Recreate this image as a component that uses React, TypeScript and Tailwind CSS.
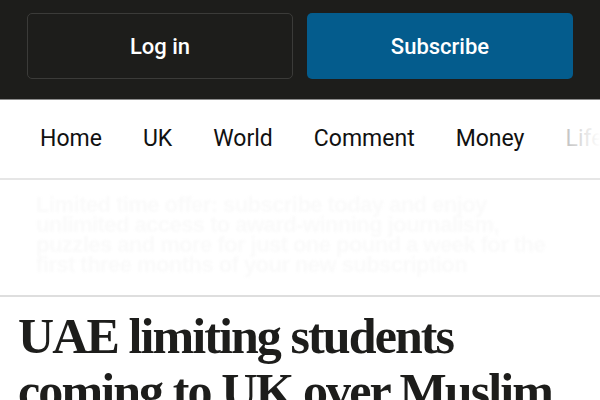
import React from "react";

const navItems = ["Home", "UK", "World", "Comment", "Money", "Life", "Sport"];

export default function App() {
  return (
    <div className="w-[600px] h-[400px] overflow-hidden bg-white" style={{ fontFamily: "Roboto, 'Liberation Sans', sans-serif" }}>
      {/* top bar */}
      <div className="h-[100px] bg-[#1d1d1b] border-b border-[#8c8c8c] flex gap-[14px] pl-[27px] pr-[27px] pt-[13px]">
        <button className="w-[266px] h-[66px] rounded-[5px] border border-[#3b3b39] text-white text-[22px] font-medium font-[Roboto]">
          Log in
        </button>
        <button className="w-[266px] h-[66px] rounded-[5px] bg-[#045c8d] text-white text-[22px] font-medium font-[Roboto]">
          Subscribe
        </button>
      </div>

      {/* nav */}
      <div className="relative h-[80px] border-b-2 border-[#e6e6e6] flex items-center pl-[40px] gap-[41px] overflow-hidden whitespace-nowrap">
        {navItems.map((n) => (
          <span key={n} className="text-[23px] text-[#111111] font-[Roboto] shrink-0">
            {n}
          </span>
        ))}
        <div className="absolute right-0 top-0 bottom-0 w-[40px] bg-gradient-to-r from-white/70 to-white" />
        <div className="absolute right-[40px] top-0 bottom-0 w-[14px] bg-white/70" />
      </div>

      {/* ad placeholder */}
      <div className="h-[117px] border-b-2 border-[#dedede] px-[36px] pt-[15px] overflow-hidden">
        <div className="text-[#fafafa] text-[22px] leading-[20px] font-bold blur-[1px] tracking-tight" style={{ fontFamily: "'Liberation Sans', sans-serif" }}>
          Limited time offer: subscribe today and enjoy unlimited access to award-winning journalism, puzzles and more for just one pound a week for the first three months of your new subscription
        </div>
      </div>

      {/* headline */}
      <div className="px-[18px] pt-[12px]">
        <h1 className="text-[50px] leading-[55px] font-bold text-[#1d1d1b] tracking-[-1.9px]" style={{ fontFamily: "'Liberation Serif', serif" }}>
          UAE limiting students coming to UK over Muslim Brotherhood fears
        </h1>
      </div>
    </div>
  );
}
